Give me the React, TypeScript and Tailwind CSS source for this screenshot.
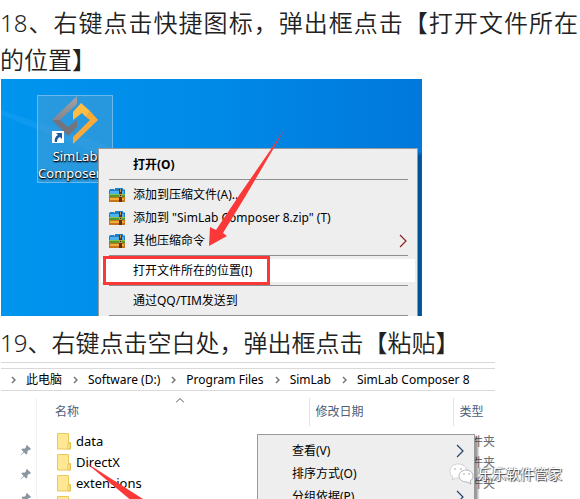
import React from 'react';
import { clsx } from 'clsx';

interface MenuItemProps {
    label: string;
    bold?: boolean;
    archive?: boolean;
    submenu?: boolean;
    highlighted?: boolean;
}

const path = ['此电脑', 'Software (D:)', 'Program Files', 'SimLab', 'SimLab Composer 8'];
const folders = ['data', 'DirectX', 'extensions'];

const ArchiveIcon = () => (
    <svg viewBox="0 0 16 14" className="h-[14px] w-4 shrink-0" aria-hidden="true">
        <path d="M0 2.5L1 1h4l1 1V0h8v1.5h2V6H0z" fill="#1e7fc4" />
        <path d="M1 3h14v3H1z" fill="#4bb2ee" />
        <path d="M0 6h16v3H0z" fill="#4b9a35" />
        <path d="M0 6h16v1H0z" fill="#8bc34a" />
        <path d="M0 9h16v5H0z" fill="#c8741b" />
        <path d="M1 10h14v2H1z" fill="#f2ae3b" />
        <path d="M10 1h3v13h-3z" fill="#5d2f17" />
        <path d="M11 1h1v3h-1zM10 6h3v3h-3z" fill="#d98b3a" />
        <path d="M11 7h1v1h-1z" fill="#3b1d0d" />
    </svg>
);

const SubmenuArrow = ({ className }: { className: string }) => (
    <svg viewBox="0 0 8 14" className={clsx('h-[14px] w-2 shrink-0', className)} fill="none" stroke="currentColor" strokeWidth="1.2" aria-hidden="true">
        <path d="M1 1l6 6-6 6" />
    </svg>
);

const FolderIcon = () => (
    <svg viewBox="0 0 14 17" className="h-[17px] w-[14px] shrink-0" aria-hidden="true">
        <path d="M.5.5h11v9h2v6.5H.5z" fill="#ffe793" stroke="#e8c95c" />
        <path d="M11 10h2v6h-2z" fill="#fff0b5" stroke="#dfb93f" strokeWidth=".8" />
    </svg>
);

const PinIcon = () => (
    <svg viewBox="0 0 12 12" className="size-3" aria-hidden="true">
        <path d="M7 1l4 4-1 1-1-.2L7.300 7.500 7.500 9.500l-1 1L4 8.500.800 11.500.500 11.200 3.500 8 1.500 5.500l1-1 2 .2L6.200 3 6 2z" fill="#8995a1" />
    </svg>
);

const SimLabLogo = () => (
    <svg viewBox="0 0 46 48" className="h-12 w-[46px]" aria-hidden="true">
        <defs>
            <linearGradient id="metal" x1="0" y1="0" x2="0" y2="1">
                <stop offset="0" stopColor="#a3a2a5" />
                <stop offset="1" stopColor="#85858b" />
            </linearGradient>
            <linearGradient id="amber" x1="0" y1="0" x2="0" y2="1">
                <stop offset="0" stopColor="#ffab2e" />
                <stop offset="1" stopColor="#f6a843" />
            </linearGradient>
        </defs>
        <path d="M25 0v8L8 24H0z" fill="url(#metal)" />
        <path d="M0 24h8l8 7 9-7v7l-9 9z" fill="#74747c" />
        <path d="M21 16l8-9 9 8-4 6-4-4-9 7z" fill="#ffbd43" />
        <path d="M38 15l8 9-25 24v-7l17-17-4-3z" fill="url(#amber)" />
    </svg>
);

const WeChatIcon = () => (
    <svg viewBox="0 0 25 22" className="h-[22px] w-[25px]" aria-hidden="true">
        <path d="M9 1C4 1 1 4 1 8c0 3 1 5 3 6l-1 3 4-2c6 1 11-2 11-7 0-4-4-7-9-7z" fill="#fff" stroke="#bbb" strokeWidth=".6" />
        <path d="M17 7c-4 0-7 3-7 6s3 6 8 6l4 2-1-3c2-1 3-3 3-5 0-3-3-6-7-6z" fill="#fff" stroke="#999" strokeWidth=".7" />
        <g fill="#999">
            <circle cx="6" cy="6" r=".8" />
            <circle cx="12" cy="6" r=".8" />
            <circle cx="15" cy="11" r=".8" />
            <circle cx="20" cy="11" r=".8" />
        </g>
    </svg>
);

const MenuItem: React.FC<MenuItemProps> = ({ label, bold, archive, submenu, highlighted }) => (
    <button
        type="button"
        className={clsx(
            'mx-0.5 flex h-[23px] items-center pl-2 pr-2 text-left whitespace-nowrap',
            bold && 'font-bold',
            highlighted && 'bg-white'
        )}
    >
        <span className="flex w-6 shrink-0">{archive && <ArchiveIcon />}</span>
        <span className="flex-1">{label}</span>
        {submenu && <SubmenuArrow className="text-[#8b2222]" />}
    </button>
);

const Separator = () => <hr className="mr-[9px] ml-[10px] my-[3px] border-[#909090]" />;

const DesktopShot = () => (
    <section className="relative ml-px h-[237px] w-full max-w-[421px] overflow-hidden bg-linear-to-r from-[#0095ee] via-[#008ae7] to-[#0078dc]">
        <svg viewBox="0 0 421 237" className="absolute inset-0 h-full w-full" aria-hidden="true">
            <path d="M0 31L110 68v12L0 36z" fill="#35adff" opacity=".25" />
        </svg>
        <div className="absolute top-4 left-9 flex h-[88px] w-[76px] flex-col items-center border border-[#69b9ef] bg-[#429ed6]/60">
            <SimLabLogo />
            <span className="absolute top-[35px] left-3.5 flex size-3 items-center justify-center bg-white">
                <svg viewBox="0 0 12 12" className="size-3" aria-hidden="true">
                    <path d="M4 2h6v6L8 6c-2 1-3 2-3 5H3c-1-3 1-6 3-7z" fill="#1d58a5" />
                </svg>
            </span>
            <span className="pt-1 text-center text-[13px] leading-[17px] text-white text-shadow-[1px_1px_2px_#000,0_1px_1px_#000]">
                SimLab Composer 8
            </span>
        </div>

        <div className="absolute top-[69px] left-[97px] flex w-80 flex-col border border-[#999] bg-[#eee] py-1 text-xs shadow-[4px_6px_3px_#0005]">
            <MenuItem label="打开(O)" bold />
            <Separator />
            <MenuItem label="添加到压缩文件(A)..." archive />
            <MenuItem label={'添加到 "SimLab Composer 8.zip" (T)'} archive />
            <MenuItem label="其他压缩命令" archive submenu />
            <Separator />
            <MenuItem label="打开文件所在的位置(I)" highlighted />
            <Separator />
            <MenuItem label="通过QQ/TIM发送到" />
            <Separator />
        </div>

        <svg viewBox="0 0 421 237" className="pointer-events-none absolute inset-0 h-full w-full" aria-hidden="true">
            <rect x="103.500" y="178.500" width="164" height="26" fill="none" stroke="#fb3838" strokeWidth="3" />
            <path d="M284 50L244 118 222 154l4 3-18 10 1-19 6 3 24-36z" fill="#fb3838" />
        </svg>
    </section>
);

const ExplorerShot = () => (
    <section className="relative ml-px flex min-h-0 w-full max-w-[494px] flex-1 flex-col overflow-hidden border-t border-[#d9d9d9] text-xs">
        <nav className="mt-[5px] flex h-[23px] shrink-0 items-center border-y border-[#d9d9d9] pl-2.5 whitespace-nowrap">
            {path.map((part) => (
                <React.Fragment key={part}>
                    <svg viewBox="0 0 5 8" className="mr-[10px] h-2 w-[5px] shrink-0" fill="none" stroke="#777" strokeWidth="1.5" aria-hidden="true">
                        <path d="M1 1l3 3-3 3" />
                    </svg>
                    <a href="#" className="mr-[11px] text-black">{part}</a>
                </React.Fragment>
            ))}
        </nav>
        <svg viewBox="0 0 8 5" className="absolute top-[35px] left-[175px] h-[5px] w-2" fill="none" stroke="#555" aria-hidden="true">
            <path d="M0 4.500l4-4 4 4" />
        </svg>

        <div className="flex pt-[7px]">
            <aside className="flex w-9 shrink-0 flex-col items-end gap-3 border-r border-[#f1f1f1] pt-[46px] pr-1">
                <PinIcon />
                <PinIcon />
                <PinIcon />
            </aside>
            <table className="w-full table-fixed border-collapse self-start text-left">
                <thead className="text-[#4c607a]">
                    <tr className="h-7">
                        <th className="w-[272px] pl-[18px] font-normal">名称</th>
                        <th className="w-36 border-l border-[#e3e3e3] pl-1.5 font-normal">修改日期</th>
                        <th className="border-l border-[#e3e3e3] pl-1.5 font-normal">类型</th>
                    </tr>
                </thead>
                <tbody>
                    <tr className="h-[5px]"><td colSpan={3} /></tr>
                    {folders.map((name) => (
                        <tr key={name} className="h-[21px]">
                            <td className="pl-5">
                                <span className="flex items-center gap-[5px] text-[13px] leading-[21px]">
                                    <FolderIcon />
                                    {name}
                                </span>
                            </td>
                            <td />
                            <td className="pl-[6px] leading-[21px] whitespace-nowrap text-[#6d6d6d]">文件夹</td>
                        </tr>
                    ))}
                    <tr className="h-[21px]">
                        <td className="pl-5"><FolderIcon /></td>
                        <td colSpan={2} />
                    </tr>
                </tbody>
            </table>
        </div>

        <svg viewBox="0 0 160 40" className="pointer-events-none absolute top-[99px] left-[84px] h-10 w-40" aria-hidden="true">
            <path d="M0 0L58 37l12 10-22-7z" fill="#fb3838" />
        </svg>

        <div className="absolute top-[71px] left-64 flex w-[218px] flex-col border border-[#999] bg-[#eee] pt-1 shadow-[3px_3px_2px_#0006]">
            {['查看(V)', '排序方式(O)', '分组依据(P)'].map((label, i) => (
                <button key={label} type="button" className="flex h-[23px] items-center pr-2.5 pl-[34px] text-left">
                    <span className="flex-1">{label}</span>
                    {i !== 1 && <SubmenuArrow className="text-[#253f70]" />}
                </button>
            ))}
        </div>
    </section>
);

export default function App() {
    return (
        <main className="relative flex h-screen flex-col overflow-hidden bg-white pt-1 font-['Noto_Sans','Noto_Sans_CJK_SC',sans-serif] text-black">
            <h2 className="mr-0.5 shrink-0 pb-px text-justify text-2xl leading-[37px] font-[350] text-[#222]">
                18、右键点击快捷图标，弹出框点击【打开文件所在的位置】
            </h2>
            <DesktopShot />
            <h2 className="shrink-0 pt-2 pb-px text-2xl leading-[37px] font-[350] text-[#222]">
                19、右键点击空白处，弹出框点击【粘贴】
            </h2>
            <ExplorerShot />

            <div className="absolute right-[18px] bottom-[14px] flex items-center gap-1">
                <WeChatIcon />
                <span className="text-sm text-white text-shadow-[1px_1px_1px_#333,-1px_0_1px_#777]">乐乐软件管家</span>
            </div>
        </main>
    );
}
